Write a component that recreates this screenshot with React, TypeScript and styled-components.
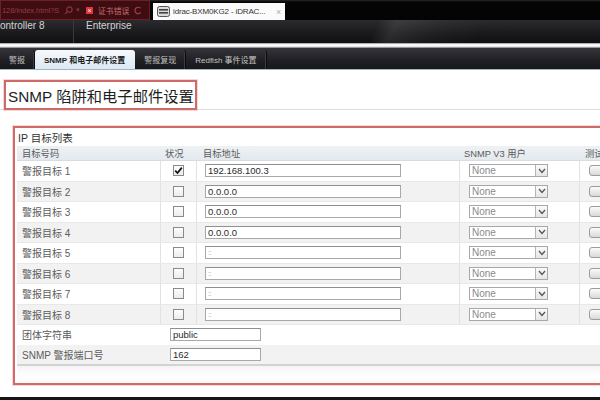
import React from 'react';
import styled, { createGlobalStyle } from 'styled-components';

const GlobalStyle = createGlobalStyle`
  html, body { margin: 0; padding: 0; width: 600px; height: 400px; overflow: hidden; background: #fff; }
  body { font-family: "Liberation Sans", "Noto Sans CJK SC", sans-serif; }
  * { box-sizing: border-box; }
`;

const Page = styled.div`
  display: flex;
  flex-direction: column;
  width: 600px;
  height: 400px;
  overflow: hidden;
`;

/* ---------- browser chrome ---------- */
const BrowserBar = styled.div`
  display: flex;
  height: 20px;
  flex-shrink: 0;
  background: linear-gradient(#2a2a2a 0, #050505 2px, #030303);
`;

const AddressBar = styled.div`
  width: 150px;
  flex-shrink: 0;
  display: flex;
  align-items: center;
  gap: 3px;
  padding: 0 2px 0 1px;
  background: #3e0d12;
  border: 1px solid #6d1f25;
  color: #8a3338;
  font-size: 8px;
  white-space: nowrap;
  overflow: hidden;
  & > * { flex-shrink: 0; }
`;

const Url = styled.span`
  color: #963a3f;
  font-size: 7.6px;
  letter-spacing: -0.1px;
  margin-right: 2px;
`;

const Caret = styled.span`
  font-size: 7px;
  margin-right: 3px;
`;

const CertError = styled.span`
  color: #c46a6d;
  font-size: 7.8px;
  margin: 0 2px;
`;

const ErrIcon = styled.span`
  display: inline-block;
  width: 7px;
  height: 7px;
  background: #e0353d;
  color: #fff;
  font-size: 7px;
  line-height: 7px;
  text-align: center;
`;

const BrowserTab = styled.div`
  width: 132px;
  flex-shrink: 0;
  margin: 3px 0 0 3px;
  display: flex;
  align-items: center;
  gap: 3px;
  padding: 0 4px 0 4px;
  background: #fbfbfb;
  color: #333;
  font-size: 8px;
  letter-spacing: -0.15px;
  white-space: nowrap;
`;

const TabTitle = styled.span`
  flex: 1;
  min-width: 0;
`;

const TabClose = styled.span`
  color: #aaa;
  font-size: 9px;
  flex-shrink: 0;
`;

/* ---------- app header ---------- */
const AppHeader = styled.div`
  height: 23px;
  flex-shrink: 0;
  display: flex;
  align-items: flex-start;
  color: #d4d4d4;
  font-size: 10px;
  line-height: 11px;
  background:
    linear-gradient(116deg, transparent 62%, rgba(255, 255, 255, 0.09) 65%, rgba(255, 255, 255, 0.03) 72%, transparent 80%),
    linear-gradient(#2b2b2f, #19191c 60%, #0f0f11);
`;

const HeaderItem = styled.div<{ $w: number; $pl: number; $divider?: boolean }>`
  width: ${(p) => p.$w}px;
  height: 100%;
  padding: 0 0 0 ${(p) => p.$pl}px;
  border-right: ${(p) => (p.$divider ? '1px solid #3a3a3e' : 'none')};
  white-space: nowrap;
  overflow: hidden;
`;

const Strip = styled.div`
  height: 5px;
  flex-shrink: 0;
  background: linear-gradient(#8c8c8c, #f4f4f4 30%, #ffffff 60%, #bdbdbd 85%, #4a4a4a);
`;

/* ---------- tabs ---------- */
const TabBar = styled.div`
  height: 22px;
  flex-shrink: 0;
  display: flex;
  align-items: stretch;
  background: linear-gradient(#34343a, #202024 60%, #18181b);
  border-bottom: 1px solid #9fb3c7;
`;

const NavTab = styled.div<{ $active?: boolean }>`
  display: flex;
  align-items: center;
  padding: 0 9px;
  margin-top: 2px;
  font-size: 8px;
  white-space: nowrap;
  color: ${(p) => (p.$active ? '#1b1b1b' : '#c2c2c2')};
  font-weight: ${(p) => (p.$active ? 700 : 400)};
  border-radius: 3px 3px 0 0;
  background: ${(p) => (p.$active ? 'linear-gradient(#f6f9fc, #dce8f3)' : 'transparent')};
  border-right: 1px solid ${(p) => (p.$active ? 'transparent' : '#0c0c0e')};
  box-shadow: ${(p) => (p.$active ? 'none' : 'inset -1px 0 0 #3c3c42')};
`;

/* ---------- content ---------- */
const Content = styled.div`
  flex: 1;
  display: flex;
  flex-direction: column;
  background: #fff;
`;

const TitleRow = styled.div`
  padding: 10px 0 0 4px;
  border-bottom: 1px solid #dedede;
  display: flex;
`;

const TitleBox = styled.h1`
  margin: 0 0 -1px 0;
  width: 193px;
  height: 30px;
  display: flex;
  align-items: center;
  padding-left: 2px;
  border: 2px solid #cf6a67;
  box-shadow: 0 0 0 1px rgba(225, 140, 140, 0.35);
  font-size: 15.3px;
  font-weight: 400;
  color: #1e1e1e;
  white-space: nowrap;
  background: #fff;
`;

const TargetBox = styled.section`
  margin: 16px 0 0 13px;
  width: 600px;
  height: 259px;
  display: flex;
  flex-direction: column;
  border: 2px solid #cf6a67;
  border-right: none;
  box-shadow: 0 0 0 1px rgba(225, 140, 140, 0.35);
`;

const Legend = styled.div`
  height: 18px;
  padding: 2px 0 0 3px;
  font-size: 10.5px;
  color: #333;
`;

const Table = styled.div`
  margin-left: 2px;
  display: flex;
  flex-direction: column;
`;

const GridRow = styled.div<{ $alt?: boolean; $h: number }>`
  display: grid;
  grid-template-columns: 144px 36px 263px 120px 60px;
  height: ${(p) => p.$h}px;
  background: ${(p) => (p.$alt ? '#f2f2f2' : '#ffffff')};
  border-bottom: 1px solid #e8e8e8;
`;

const HeaderRow = styled(GridRow)`
  background: linear-gradient(#eef2f5, #e4e9ee);
  border-bottom: 1px solid #d6dce2;
`;

const Cell = styled.div<{ $pl?: number; $center?: boolean; $last?: boolean }>`
  display: flex;
  align-items: center;
  justify-content: ${(p) => (p.$center ? 'center' : 'flex-start')};
  padding-left: ${(p) => p.$pl ?? 0}px;
  border-right: ${(p) => (p.$last ? 'none' : '1px solid #e2e2e2')};
  font-size: 10px;
  color: #5c5c5c;
  white-space: nowrap;
  overflow: hidden;
`;

const HeadCell = styled(Cell)`
  font-size: 9.3px;
  color: #5a5a5a;
  border-right-color: transparent;
`;

const SettingRow = styled.div<{ $alt?: boolean; $h: number }>`
  display: grid;
  grid-template-columns: 153px 1fr;
  height: ${(p) => p.$h}px;
  background: ${(p) => (p.$alt ? '#f2f2f2' : '#ffffff')};
  align-items: center;
  font-size: 10px;
  color: #5c5c5c;
`;

const SettingLabel = styled.div`
  padding-left: 5px;
  white-space: nowrap;
`;

const TextInput = styled.div<{ $w: number; $muted?: boolean }>`
  width: ${(p) => p.$w}px;
  height: 13px;
  display: flex;
  align-items: center;
  padding-left: 2px;
  border: 1px solid #a8a8a8;
  border-top-color: #8f8f8f;
  background: #fff;
  font-size: ${(p) => (p.$muted ? '7px' : '9.5px')};
  color: ${(p) => (p.$muted ? '#9a9a9a' : '#2a2a2a')};
  letter-spacing: ${(p) => (p.$muted ? '-0.5px' : '0')};
  white-space: nowrap;
  overflow: hidden;
`;

const Check = styled.div`
  width: 11px;
  height: 11px;
  border: 1px solid #8a8a8a;
  background: linear-gradient(#fdfdfd, #ececec);
  display: flex;
  align-items: center;
  justify-content: center;
`;

const Select = styled.div`
  width: 79px;
  height: 13px;
  display: flex;
  border: 1px solid #a8a8a8;
  background: #fff;
`;

const SelectValue = styled.div`
  flex: 1;
  padding-left: 2px;
  font-size: 10px;
  line-height: 11px;
  color: #8a8a8a;
`;

const SelectArrow = styled.div`
  width: 12px;
  border-left: 1px solid #b5b5b5;
  background: linear-gradient(#fafafa, #e6e6e6);
  display: flex;
  align-items: center;
  justify-content: center;
`;

const TestButton = styled.div`
  width: 28px;
  height: 11px;
  border: 1px solid #9c9c9c;
  border-radius: 3px;
  background: linear-gradient(#fbfbfb, #d9d9d9);
`;

const BoxFooter = styled.div`
  flex: 1;
  margin-left: 2px;
  border-top: 2px solid #d3d3d3;
  background: linear-gradient(#f4f4f4, #ffffff 60%, #f8f8f8);
`;

const Gap = styled.div`
  flex: 1;
`;

const BottomBar = styled.div`
  height: 3px;
  background: #161616;
`;

/* ---------- icons ---------- */
const SearchIcon = () => (
  <svg width="9" height="9" viewBox="0 0 10 10">
    <circle cx="6" cy="4" r="3" fill="none" stroke="#8a3338" strokeWidth="1.3" />
    <line x1="3.8" y1="6.2" x2="1" y2="9" stroke="#8a3338" strokeWidth="1.4" />
  </svg>
);

const RefreshIcon = () => (
  <svg width="8" height="9" viewBox="0 0 8 9">
    <path d="M6.5 2.2 A3.2 3.2 0 1 0 6.8 6.3" fill="none" stroke="#9c4046" strokeWidth="1.2" />
  </svg>
);

const SiteIcon = () => (
  <svg width="13" height="11" viewBox="0 0 13 11" style={{ flexShrink: 0 }}>
    <rect x="0.5" y="0.5" width="12" height="10" rx="2" fill="#d9d9d9" stroke="#555" />
    <rect x="2" y="3" width="9" height="1.6" fill="#444" />
    <rect x="2" y="6" width="9" height="1.6" fill="#444" />
  </svg>
);

const CheckMark = () => (
  <svg width="9" height="9" viewBox="0 0 9 9">
    <path d="M1.2 4.6 L3.5 7 L7.8 1.6" fill="none" stroke="#111" strokeWidth="1.7" />
  </svg>
);

const Chevron = () => (
  <svg width="8" height="6" viewBox="0 0 8 6">
    <path d="M1 1 L4 4.5 L7 1" fill="none" stroke="#555" strokeWidth="1.3" />
  </svg>
);

const targets = [
  { name: '警报目标 1', checked: true, addr: '192.168.100.3', muted: false },
  { name: '警报目标 2', checked: false, addr: '0.0.0.0', muted: false },
  { name: '警报目标 3', checked: false, addr: '0.0.0.0', muted: false },
  { name: '警报目标 4', checked: false, addr: '0.0.0.0', muted: false },
  { name: '警报目标 5', checked: false, addr: '::', muted: true },
  { name: '警报目标 6', checked: false, addr: '::', muted: true },
  { name: '警报目标 7', checked: false, addr: '::', muted: true },
  { name: '警报目标 8', checked: false, addr: '::', muted: true },
];

export default function App() {
  return (
    <Page>
      <GlobalStyle />
      <BrowserBar>
        <AddressBar>
          <Url>128/index.html?S</Url>
          <SearchIcon />
          <Caret>▾</Caret>
          <ErrIcon>×</ErrIcon>
          <CertError>证书错误</CertError>
          <RefreshIcon />
        </AddressBar>
        <BrowserTab>
          <SiteIcon />
          <TabTitle>idrac-BXM0KG2 - iDRAC...</TabTitle>
          <TabClose>×</TabClose>
        </BrowserTab>
      </BrowserBar>

      <AppHeader>
        <HeaderItem $w={74} $pl={0} $divider>ontroller 8</HeaderItem>
        <HeaderItem $w={120} $pl={12}>Enterprise</HeaderItem>
      </AppHeader>
      <Strip />

      <TabBar>
        <NavTab>警报</NavTab>
        <NavTab $active>SNMP 和电子邮件设置</NavTab>
        <NavTab>警报复现</NavTab>
        <NavTab>Redfish 事件设置</NavTab>
      </TabBar>

      <Content>
        <TitleRow>
          <TitleBox>SNMP 陷阱和电子邮件设置</TitleBox>
        </TitleRow>

        <TargetBox>
          <Legend>IP 目标列表</Legend>
          <Table>
            <HeaderRow $h={15}>
              <HeadCell $pl={5}>目标号码</HeadCell>
              <HeadCell $pl={4}>状况</HeadCell>
              <HeadCell $pl={6}>目标地址</HeadCell>
              <HeadCell $pl={4}>SNMP V3 用户</HeadCell>
              <HeadCell $pl={5} $last>测试</HeadCell>
            </HeaderRow>
            {targets.map((t, i) => (
              <GridRow key={t.name} $h={20.5} $alt={i % 2 === 1}>
                <Cell $pl={5}>{t.name}</Cell>
                <Cell $center>
                  <Check>{t.checked && <CheckMark />}</Check>
                </Cell>
                <Cell $pl={8}>
                  <TextInput $w={196} $muted={t.muted}>{t.addr}</TextInput>
                </Cell>
                <Cell $pl={9}>
                  <Select>
                    <SelectValue>None</SelectValue>
                    <SelectArrow>
                      <Chevron />
                    </SelectArrow>
                  </Select>
                </Cell>
                <Cell $pl={9} $last>
                  <TestButton />
                </Cell>
              </GridRow>
            ))}
            <SettingRow $h={19.5}>
              <SettingLabel>团体字符串</SettingLabel>
              <TextInput $w={91}>public</TextInput>
            </SettingRow>
            <SettingRow $h={19.5} $alt>
              <SettingLabel>SNMP 警报端口号</SettingLabel>
              <TextInput $w={91}>162</TextInput>
            </SettingRow>
          </Table>
          <BoxFooter />
        </TargetBox>
        <Gap />
        <BottomBar />
      </Content>
    </Page>
  );
}
